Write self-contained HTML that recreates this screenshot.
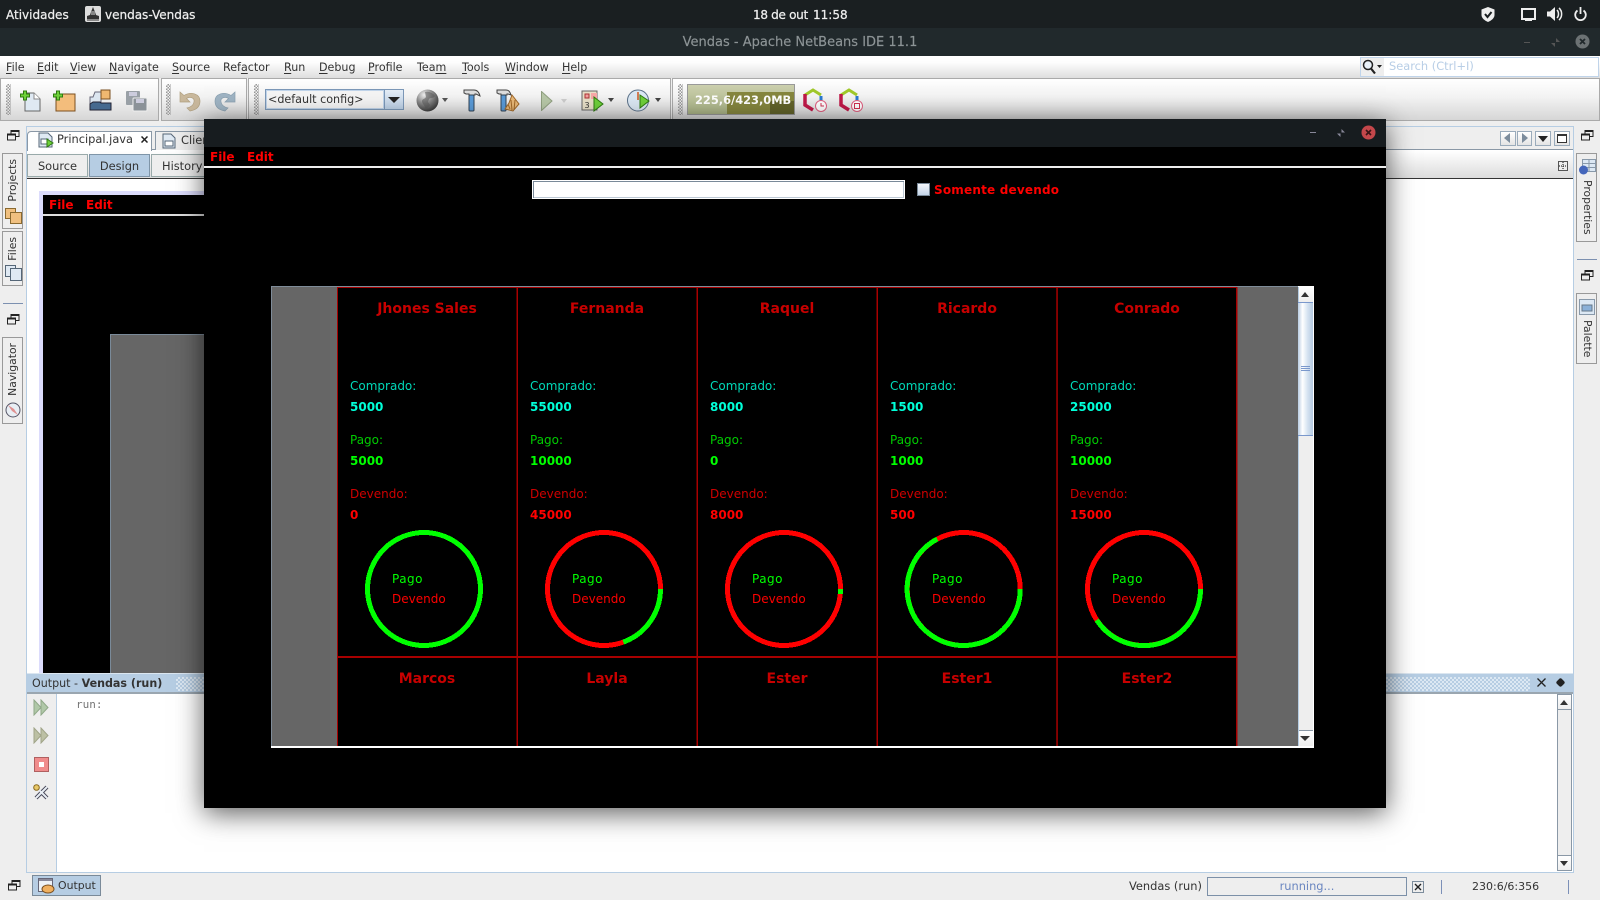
<!DOCTYPE html>
<html><head><meta charset="utf-8"><title>Vendas - Apache NetBeans IDE 11.1</title>
<style>
*{box-sizing:border-box}
html,body{margin:0;padding:0;width:1600px;height:900px;overflow:hidden;background:#eee;font-family:"DejaVu Sans","Liberation Sans",sans-serif;font-size:12px}
.a{position:absolute}
.t{position:absolute;white-space:nowrap;line-height:14px;font-size:11.4px;color:#333}
.t u{text-decoration:underline;text-underline-offset:2px}
.m{font-size:11.1px;top:61px}
.b12{font-size:12px}
.n{font-weight:bold;font-size:14px;line-height:16px;color:#c80000;width:176px;text-align:center}
.c{color:#00d8b8;font-size:12px}.cv{color:#00ffd8;font-weight:bold;font-size:12px}
.g{color:#00cc00;font-size:12px}.gv{color:#00ff00;font-weight:bold;font-size:12px}
.r{color:#d00000;font-size:12px}.rv{color:#ff0000;font-weight:bold;font-size:12px}
.pg{color:#00ff00;font-size:12px;letter-spacing:.5px}.dv{color:#ff0000;font-size:12px}
.tb{position:absolute;top:78px;height:43px;background:linear-gradient(#fff,#f2f2f2 45%,#d6d6d6);border:1px solid #aaa}
.grip{position:absolute;top:84px;width:5px;height:31px;background-image:conic-gradient(#999 25%,transparent 0 50%,#999 0 75%,transparent 0);background-size:3px 3px}
.side{position:absolute;background:#eee;border:1px solid #999}
.v{position:absolute;writing-mode:vertical-rl;white-space:nowrap;line-height:14px;font-size:10.8px;color:#333}
.btn{position:absolute;background:#eee;border:1px solid #9aa;text-align:center;line-height:22px;font-size:11.4px;color:#333}
.sq{position:absolute;background:linear-gradient(#fff,#e4e4e4);border:1px solid #9aabbb}
</style></head><body>

<!-- GNOME top bar -->
<div class="a" style="left:0;top:0;width:1600px;height:28px;background:#1a1f21"></div>
<div class="a" style="left:0;top:28px;width:1600px;height:28px;background:#21292c"></div>
<div class="t b12" style="left:6px;top:8px;color:#eee;-webkit-text-stroke:.25px #eee">Atividades</div>
<svg class="a" style="left:85px;top:6px" width="16" height="16"><rect width="16" height="16" rx="2" fill="#ddd"/><path d="M8 1l2 5 1 3 3 1v3H2v-3l3-1 1-3z" fill="#333"/><rect x="6" y="5" width="4" height="4" fill="#888"/><rect x="2" y="13" width="12" height="2" fill="#888"/></svg>
<div class="t b12" style="left:105px;top:8px;color:#eee;-webkit-text-stroke:.25px #eee">vendas-Vendas</div>
<div class="t b12" style="left:753px;top:8px;color:#eee;letter-spacing:-.3px;-webkit-text-stroke:.25px #eee">18 de out</div>
<div class="t b12" style="left:813px;top:8px;color:#eee;-webkit-text-stroke:.25px #eee">11:58</div>
<svg class="a" style="left:1481px;top:7px" width="14" height="15"><path d="M7 0l6.500 2.500V8c0 3-3 5.500-6.500 7C3.500 13.500.5 11 .5 8V2.500z" fill="#eee"/><path d="M4 7l2.500 3L10.500 5" fill="none" stroke="#1a1f21" stroke-width="2"/></svg>
<svg class="a" style="left:1521px;top:8px" width="15" height="13"><rect x="1" y="1" width="13" height="10" fill="none" stroke="#eee" stroke-width="2"/><rect x="4" y="11" width="7" height="2" fill="#eee"/></svg>
<svg class="a" style="left:1547px;top:7px" width="16" height="14"><path d="M0 4.500h3L8 0v14L3 9.500H0z" fill="#eee"/><path d="M10 3c2 2 2 6 0 8M12 1c3.500 3 3.500 9 0 12" fill="none" stroke="#eee" stroke-width="1.500"/></svg>
<svg class="a" style="left:1574px;top:7px" width="13" height="14"><path d="M3.500 3.500a5.300 5.300 0 1 0 6 0" fill="none" stroke="#eee" stroke-width="1.800"/><path d="M6.500 0v7" stroke="#eee" stroke-width="1.800"/></svg>
<div class="t" style="left:600px;width:400px;top:35px;text-align:center;color:#8d9496;font-size:13px;line-height:16px;-webkit-text-stroke:.15px #8d9496">Vendas - Apache NetBeans IDE 11.1</div>
<div class="a" style="left:1524px;top:42px;width:6px;height:1px;background:#555"></div>
<svg class="a" style="left:1551px;top:38px" width="9" height="9"><path d="M5 0v4h4M4 9V5H0" fill="#555"/></svg>
<svg class="a" style="left:1575px;top:34px" width="15" height="15"><circle cx="7.500" cy="7.500" r="7" fill="#6c7274"/><path d="M5 5l5 5M10 5l-5 5" stroke="#21292c" stroke-width="1.800"/></svg>

<!-- Menu bar -->
<div class="a" style="left:0;top:56px;width:1600px;height:22px;background:linear-gradient(#fff,#fdfdfd 30%,#dedede)"></div>
<div class="t m" style="left:6px"><u>F</u>ile</div>
<div class="t m" style="left:37px"><u>E</u>dit</div>
<div class="t m" style="left:70px"><u>V</u>iew</div>
<div class="t m" style="left:109px"><u>N</u>avigate</div>
<div class="t m" style="left:172px"><u>S</u>ource</div>
<div class="t m" style="left:223px">Ref<u>a</u>ctor</div>
<div class="t m" style="left:284px"><u>R</u>un</div>
<div class="t m" style="left:319px"><u>D</u>ebug</div>
<div class="t m" style="left:368px"><u>P</u>rofile</div>
<div class="t m" style="left:417px">Tea<u>m</u></div>
<div class="t m" style="left:462px"><u>T</u>ools</div>
<div class="t m" style="left:505px"><u>W</u>indow</div>
<div class="t m" style="left:562px"><u>H</u>elp</div>
<!-- Search -->
<div class="a" style="left:1360px;top:57px;width:239px;height:20px;background:#fff;border:1px solid #c0d4ea"></div>
<div class="a" style="left:1361px;top:58px;width:23px;height:18px;background:#eee"></div>
<svg class="a" style="left:1362px;top:59px" width="21" height="16"><circle cx="6" cy="6" r="4.500" fill="#e8f0f8" stroke="#222" stroke-width="1.500"/><path d="M9 9.500l4 5" stroke="#222" stroke-width="2.200"/><path d="M15 6h5l-2.500 3z" fill="#222"/></svg>
<div class="t" style="left:1389px;top:59px;color:#b8cee6">Search (Ctrl+I)</div>

<!-- Toolbars -->
<div class="a" style="left:0;top:78px;width:1600px;height:43px;background:#eee"></div>
<div class="tb" style="left:0;width:159px"></div>
<div class="tb" style="left:161px;width:86px"></div>
<div class="tb" style="left:248px;width:423px"></div>
<div class="tb" style="left:672px;width:928px"></div>
<div class="grip" style="left:6px"></div>
<div class="grip" style="left:166px"></div>
<div class="grip" style="left:254px"></div>
<div class="grip" style="left:678px"></div>

<svg class="a" style="left:20px;top:90px" width="21" height="22"><path d="M5 3h9l6 6v12H5z" fill="#dfe9f3" stroke="#666"/><path d="M14 3v6h6" fill="#fff" stroke="#888"/><path d="M3 3h3V0h3v3h3v3H9v3H6V6H3z" transform="translate(-2.500 1)" fill="#6fd13a" stroke="#2d7a10"/></svg>
<svg class="a" style="left:53px;top:90px" width="23" height="22"><path d="M3 4h19v17H3z" fill="#f3bd7c" stroke="#7b5020"/><path d="M3 3h3V0h3v3h3v3H9v3H6V6H3z" transform="translate(-2.500 1)" fill="#6fd13a" stroke="#2d7a10"/></svg>
<svg class="a" style="left:89px;top:89px" width="23" height="23"><path d="M1 8h3l2-5h6v18H1z" fill="#dce6f0" stroke="#667"/><rect x="12" y="1" width="9" height="9" fill="#f0b870" stroke="#7b5020"/><path d="M1 21v-6l3-2h7l1 1h10v7z" fill="#45698f" stroke="#223"/></svg>
<svg class="a" style="left:125px;top:90px" width="23" height="22"><rect x="1" y="1" width="14" height="14" rx="1" fill="#99a0a6"/><rect x="4" y="2" width="8" height="4" fill="#ccd"/><rect x="8" y="8" width="14" height="13" rx="1" fill="#8b9298" stroke="#eee"/><rect x="11" y="9" width="8" height="4" fill="#ccd"/></svg>
<svg class="a" style="left:179px;top:90px" width="22" height="22"><path d="M1 2v10h10L7.500 8.500C11 6 16 8 15 12c-.5 3-3 5-7 6l3 3c6-1 10-4 10-10C21 4 12 1 5 5.500z" fill="#c9b89c" stroke="#b0a080" stroke-width=".7"/></svg>
<svg class="a" style="left:214px;top:90px" width="22" height="22"><path d="M21 2v10H11l3.500-3.500C11 6 6 8 7 12c.5 3 3 5 7 6l-3 3C5 20 1 17 1 11 1 4 10 1 17 5.500z" fill="#9fb4c4" stroke="#8aa0b0" stroke-width=".7"/></svg>

<!-- combo -->
<div class="a" style="left:265px;top:89px;width:139px;height:21px;background:#fff;border:1px solid #7c98b8"></div>
<div class="a" style="left:266px;top:90px;width:118px;height:19px;background:#f4f4f4;border:1px solid #c0d4ea"></div>
<div class="t" style="left:268px;top:93px;font-size:11.15px">&lt;default config&gt;</div>
<div class="a" style="left:384px;top:90px;width:19px;height:19px;background:linear-gradient(#e4edf6,#bcd0e6);border-left:1px solid #7c98b8"></div>
<div class="a" style="left:388px;top:97px;width:0;height:0;border:6px solid transparent;border-top:6px solid #222;border-bottom:0"></div>

<svg class="a" style="left:416px;top:89px" width="23" height="23"><defs><radialGradient id="gl" cx=".35" cy=".25" r=".85"><stop offset="0" stop-color="#f0f0f0"/><stop offset=".45" stop-color="#8a8a8a"/><stop offset="1" stop-color="#2c2c2c"/></radialGradient></defs><circle cx="11.500" cy="11.500" r="11" fill="url(#gl)"/><path d="M9 3c4-1 8 1 10 4-2 3-4 1-6 3l-1 3 2 3c-2 3-4 4-5 3 0-3-3-4-3-7 0-2 3-2 4-4z" fill="#555" opacity=".55"/></svg>
<div class="a" style="left:442px;top:98px;border:3.500px solid transparent;border-top:4px solid #555;border-bottom:0"></div>
<svg class="a" style="left:463px;top:89px" width="18" height="23"><path d="M1 1h10c3 0 5 2 6 6l-4-2h-1v1H6V5H3L1 4z" fill="#ddd" stroke="#444"/><rect x="6" y="6" width="5" height="16" rx="1" fill="#5a9bd8" stroke="#345"/></svg>
<svg class="a" style="left:496px;top:89px" width="24" height="23"><path d="M1 1h9c3 0 4 2 5 5l-3-1h-1v1H5V5H3L1 4z" fill="#ddd" stroke="#444"/><rect x="5" y="6" width="5" height="16" rx="1" fill="#5a9bd8" stroke="#345"/><path d="M16 6l7 9-6 7-8-2 4-6z" fill="#e8b878" stroke="#a06828"/><path d="M15 11l1 10M19 11l-1 10M12 15l2 5" stroke="#a06828" fill="none"/></svg>
<svg class="a" style="left:541px;top:91px" width="12" height="20"><path d="M.5.5L11 10 .5 19.500z" fill="#b8c8a8" stroke="#90a080"/></svg>
<div class="a" style="left:561px;top:99px;border:3.500px solid transparent;border-top:4px solid #ccc;border-bottom:0"></div>
<svg class="a" style="left:581px;top:89px" width="23" height="23"><rect x="1" y="2" width="15" height="19" fill="#e8e0c8" stroke="#666"/><rect x="4" y="5" width="4" height="4" fill="#f4a0a0" stroke="#a33"/><text x="3.500" y="19" font-size="8" fill="#333" font-family="DejaVu Sans">3</text><rect x="10" y="4" width="6" height="6" fill="#f8a8a8"/><path d="M13 8l9 7-9 7z" fill="#6fd13a" stroke="#2d7a10"/></svg>
<div class="a" style="left:608px;top:98px;border:3.500px solid transparent;border-top:4px solid #444;border-bottom:0"></div>
<svg class="a" style="left:627px;top:89px" width="23" height="23"><circle cx="11" cy="11.500" r="10.500" fill="#dbe8f4" stroke="#5a7088"/><path d="M11 3v8" stroke="#d05a20" stroke-width="1.500"/><path d="M13 6l9 6-9 7z" fill="#6fd13a" stroke="#2d7a10"/></svg>
<div class="a" style="left:655px;top:98px;border:3.500px solid transparent;border-top:4px solid #444;border-bottom:0"></div>

<!-- Memory -->
<div class="a" style="left:687px;top:84px;width:108px;height:31px;border:1px solid #999;background:linear-gradient(#ccd0ae,#a8b284)"></div>
<div class="a" style="left:727px;top:92px;width:67px;height:22px;background:#85863e"></div>
<div class="a" style="left:770px;top:101px;width:24px;height:13px;background:#62632a"></div>
<div class="t" style="left:695px;top:93px;color:#fff;font-weight:bold;font-size:11.4px">225,6/423,0MB</div>

<svg class="a" style="left:803px;top:88px" width="24" height="24"><path d="M2 7l8-5 8 5" fill="none" stroke="#a0c82a" stroke-width="3"/><path d="M2 6v11l8 5" fill="none" stroke="#c01848" stroke-width="3.500"/><path d="M18 8v5" stroke="#2a78d0" stroke-width="3"/><circle cx="18" cy="18" r="5.500" fill="#fff" stroke="#e06080"/><path d="M18 15v3h3" stroke="#d03050" fill="none"/></svg>
<svg class="a" style="left:839px;top:88px" width="24" height="24"><path d="M2 7l8-5 8 5" fill="none" stroke="#a0c82a" stroke-width="3"/><path d="M2 6v11l8 5" fill="none" stroke="#c01848" stroke-width="3.500"/><path d="M18 8v5" stroke="#2a78d0" stroke-width="3"/><circle cx="18" cy="18" r="5.500" fill="#fff" stroke="#e06080"/><rect x="15.500" y="15.500" width="5" height="5" fill="#fff" stroke="#d03050"/></svg>

<!-- Main area -->
<div class="a" style="left:26px;top:126px;width:1548px;height:747px;border:1px solid #b6cde3;background:#fff"></div>
<!-- tabs row -->
<div class="a" style="left:27px;top:127px;width:1546px;height:23px;background:#eee;border-bottom:1px solid #8a98a6"></div>
<div class="a" style="left:27px;top:131px;width:125px;height:20px;background:#fff;border:1px solid #8a98a6;border-bottom:0;border-radius:4px 0 0 0"></div>
<div class="a" style="left:155px;top:131px;width:60px;height:19px;background:#eee;border:1px solid #8a98a6;border-bottom:0"></div>
<svg class="a" style="left:38px;top:132px" width="16" height="16"><path d="M1 1h9l4 4v10H1z" fill="#dfe9f3" stroke="#567"/><rect x="3" y="7" width="7" height="5" fill="#fff" stroke="#567"/><path d="M9 7l6 4-6 4z" fill="#6fd13a" stroke="#2d7a10"/></svg>
<div class="t" style="left:57px;top:132px">Principal.java</div>
<svg class="a" style="left:141px;top:136px" width="7" height="7"><path d="M.5.5l6 6M6.500.5l-6 6" stroke="#222" stroke-width="1.500"/></svg>
<svg class="a" style="left:162px;top:133px" width="14" height="16"><path d="M1 1h8l4 4v10H1z" fill="#dfe9f3" stroke="#567"/><rect x="3" y="8" width="8" height="5" fill="#fff" stroke="#567"/></svg>
<div class="t" style="left:181px;top:133px">Clien</div>
<div class="sq" style="left:1500px;top:131px;width:16px;height:15px"></div>
<div class="sq" style="left:1517px;top:131px;width:15px;height:15px"></div>
<div class="sq" style="left:1535px;top:131px;width:16px;height:15px"></div>
<div class="sq" style="left:1554px;top:131px;width:16px;height:15px"></div>
<div class="a" style="left:1504px;top:133px;border:5px solid transparent;border-right:6px solid #7c8c9c;border-left:0;border-top-width:5.500px;border-bottom-width:5.500px"></div>
<div class="a" style="left:1522px;top:133px;border:5px solid transparent;border-left:6px solid #7c8c9c;border-right:0;border-top-width:5.500px;border-bottom-width:5.500px"></div>
<div class="a" style="left:1538px;top:136px;border:5px solid transparent;border-top:6px solid #222;border-bottom:0"></div>
<div class="a" style="left:1557px;top:134px;width:10px;height:9px;border:1px solid #333;border-top-width:2px;background:#fff"></div>
<!-- source/design row -->
<div class="a" style="left:27px;top:151px;width:1546px;height:27px;background:linear-gradient(#fff,#dcdcdc)"></div>
<div class="a" style="left:27px;top:178px;width:1546px;height:1px;background:#333"></div>
<div class="btn" style="left:27px;top:154px;width:61px;height:23px">Source</div>
<div class="btn" style="left:89px;top:154px;width:61px;height:23px;background:#b6cde3;border-color:#7f95a8">Design</div>
<div class="btn" style="left:151px;top:154px;width:70px;height:23px;text-align:left;padding-left:10px">History</div>
<svg class="a" style="left:1558px;top:161px" width="10" height="10"><rect x=".5" y=".5" width="9" height="9" fill="#eee" stroke="#555"/><path d="M5 1v8M1 5h8" stroke="#111" stroke-dasharray="1 1" fill="none"/></svg>

<!-- form preview -->
<div class="a" style="left:39px;top:191px;width:300px;height:482px;background:#dcdcfc"></div>
<div class="a" style="left:43px;top:195px;width:296px;height:478px;background:#000"></div>
<div class="a" style="left:43px;top:214px;width:296px;height:2px;background:#ddd"></div>
<div class="t b12" style="left:49px;top:198px;color:#f00;font-weight:bold">File</div>
<div class="t b12" style="left:86px;top:198px;color:#f00;font-weight:bold">Edit</div>
<div class="a" style="left:110px;top:334px;width:229px;height:339px;background:#666;border:1px solid #7a8a99;border-right:0;border-bottom:0"></div>

<!-- Output -->
<div class="a" style="left:27px;top:673px;width:1546px;height:21px;background:#b6cde3;border-bottom:2px solid #9aa6b0;border-top:1px solid #dbe6f0"></div>
<div class="t" style="left:32px;top:677px;font-size:11.1px">Output - <b>Vendas (run)</b></div>
<div class="a" style="left:176px;top:677px;width:1354px;height:14px;background-image:conic-gradient(#dce8f3 25%,#b6cde3 0 50%,#dce8f3 0 75%,#b6cde3 0);background-size:4px 4px"></div>
<svg class="a" style="left:1537px;top:678px" width="9" height="9"><path d="M.5.5l8 8M8.500.5l-8 8" stroke="#222" stroke-width="1.300"/></svg>
<div class="a" style="left:1557px;top:679px;width:7px;height:7px;background:#222;transform:rotate(45deg);border-radius:2px"></div>
<div class="a" style="left:27px;top:694px;width:30px;height:178px;background:#eee;border-right:1px solid #b6cde3"></div>
<div class="a" style="left:57px;top:694px;width:1516px;height:178px;background:#fff"></div>
<div class="t" style="left:76px;top:698px;font-family:'DejaVu Sans Mono',monospace;font-size:11px;color:#777">run:</div>
<svg class="a" style="left:33px;top:699px" width="16" height="17"><path d="M1 1l7 7.500-7 7.500zM8 1l7 7.500-7 7.500z" fill="#b0c8a8" stroke="#8fa888"/></svg>
<svg class="a" style="left:33px;top:727px" width="16" height="17"><path d="M1 1l7 7.500-7 7.500zM8 1l7 7.500-7 7.500z" fill="#bcc0a4" stroke="#a0a488"/></svg>
<svg class="a" style="left:34px;top:757px" width="15" height="15"><rect x=".5" y=".5" width="14" height="14" fill="#f08c8c" stroke="#b06060"/><rect x="5" y="5" width="5" height="5" fill="#fff"/></svg>
<svg class="a" style="left:33px;top:784px" width="17" height="16"><circle cx="3.500" cy="3.500" r="2.800" fill="#e8c868" stroke="#8a6a20"/><path d="M3 14l11-11M14 14L7 7" stroke="#445" stroke-width="4"/><path d="M3 14l11-11M14 14L7 7" stroke="#e8eef4" stroke-width="2"/></svg>
<!-- output scrollbar -->
<div class="a" style="left:1557px;top:694px;width:15px;height:177px;background:#eee;border:1px solid #8a98a6"></div>
<div class="a" style="left:1558px;top:695px;width:13px;height:15px;background:linear-gradient(#fff,#eee);border-bottom:1px solid #8a98a6"></div>
<div class="a" style="left:1558px;top:855px;width:13px;height:15px;background:linear-gradient(#fff,#eee);border-top:1px solid #8a98a6"></div>
<div class="a" style="left:1560px;top:700px;border:4.500px solid transparent;border-bottom:5px solid #333;border-top:0"></div>
<div class="a" style="left:1560px;top:861px;border:4.500px solid transparent;border-top:5px solid #333;border-bottom:0"></div>

<!-- left strip -->
<div class="a" style="left:0;top:121px;width:26px;height:752px;background:#eee"></div>
<svg class="a" style="left:7px;top:130px" width="13" height="11"><rect x="4" y=".5" width="8" height="6" fill="#eee" stroke="#222"/><rect x=".5" y="4" width="8" height="6" fill="#eee" stroke="#222"/><rect x=".5" y="4" width="8" height="1.500" fill="#222"/><rect x="4" y=".5" width="8" height="1.500" fill="#222"/></svg>
<div class="side" style="left:2px;top:153px;width:21px;height:76px"></div>
<div class="v" style="left:6px;top:159px;transform:rotate(180deg)">Projects</div>
<svg class="a" style="left:5px;top:208px" width="17" height="16"><rect x=".5" y=".5" width="10" height="10" fill="#f0c080" stroke="#8a6a30"/><rect x="5.500" y="4.500" width="11" height="11" fill="#f0c080" stroke="#8a6a30"/></svg>
<div class="side" style="left:2px;top:231px;width:21px;height:55px"></div>
<div class="v" style="left:6px;top:237px;transform:rotate(180deg)">Files</div>
<svg class="a" style="left:5px;top:265px" width="17" height="16"><rect x=".5" y=".5" width="10" height="11" fill="#dfe9f3" stroke="#567"/><rect x="5.500" y="3.500" width="11" height="12" fill="#dfe9f3" stroke="#567"/></svg>
<div class="a" style="left:3px;top:303px;width:20px;height:1px;background:#7c90b0"></div>
<svg class="a" style="left:7px;top:314px" width="13" height="11"><rect x="4" y=".5" width="8" height="6" fill="#eee" stroke="#222"/><rect x=".5" y="4" width="8" height="6" fill="#eee" stroke="#222"/><rect x=".5" y="4" width="8" height="1.500" fill="#222"/><rect x="4" y=".5" width="8" height="1.500" fill="#222"/></svg>
<div class="side" style="left:2px;top:337px;width:21px;height:87px"></div>
<div class="v" style="left:6px;top:343px;transform:rotate(180deg)">Navigator</div>
<svg class="a" style="left:5px;top:402px" width="16" height="16"><circle cx="8" cy="8" r="7" fill="#e8eef4" stroke="#556"/><path d="M3 3l6 4 4 6-6-4z" fill="#e09090"/></svg>

<!-- right strip -->
<div class="a" style="left:1574px;top:121px;width:26px;height:752px;background:#eee"></div>
<svg class="a" style="left:1581px;top:130px" width="13" height="11"><rect x="4" y=".5" width="8" height="6" fill="#eee" stroke="#222"/><rect x=".5" y="4" width="8" height="6" fill="#eee" stroke="#222"/><rect x=".5" y="4" width="8" height="1.500" fill="#222"/><rect x="4" y=".5" width="8" height="1.500" fill="#222"/></svg>
<div class="side" style="left:1576px;top:153px;width:21px;height:89px"></div>
<svg class="a" style="left:1579px;top:159px" width="17" height="16"><rect x="3.500" y=".5" width="13" height="12" fill="#dce8f4" stroke="#89a"/><path d="M4 4.500h12M4 8.500h12M10 1v11" stroke="#89a"/><circle cx="4.500" cy="11" r="4.500" fill="#4466bb"/></svg>
<div class="v" style="left:1580px;top:180px">Properties</div>
<div class="a" style="left:1577px;top:259px;width:20px;height:1px;background:#7c90b0"></div>
<svg class="a" style="left:1581px;top:270px" width="13" height="11"><rect x="4" y=".5" width="8" height="6" fill="#eee" stroke="#222"/><rect x=".5" y="4" width="8" height="6" fill="#eee" stroke="#222"/><rect x=".5" y="4" width="8" height="1.500" fill="#222"/><rect x="4" y=".5" width="8" height="1.500" fill="#222"/></svg>
<div class="side" style="left:1576px;top:293px;width:21px;height:71px"></div>
<svg class="a" style="left:1579px;top:299px" width="16" height="16"><rect x=".5" y=".5" width="15" height="15" fill="#dce8f4" stroke="#89a"/><rect x="3" y="6" width="10" height="6" fill="#8ab0d8" stroke="#678"/></svg>
<div class="v" style="left:1580px;top:320px">Palette</div>

<!-- Status bar -->
<div class="a" style="left:0;top:873px;width:1600px;height:27px;background:#eee"></div>
<svg class="a" style="left:8px;top:880px" width="13" height="11"><rect x="4" y=".5" width="8" height="6" fill="#eee" stroke="#222"/><rect x=".5" y="4" width="8" height="6" fill="#eee" stroke="#222"/><rect x=".5" y="4" width="8" height="1.500" fill="#222"/><rect x="4" y=".5" width="8" height="1.500" fill="#222"/></svg>
<div class="a" style="left:32px;top:875px;width:69px;height:21px;background:#b6cde3;border:1px solid #7a8a99"></div>
<svg class="a" style="left:38px;top:878px" width="17" height="16"><rect x=".5" y=".5" width="14" height="13" fill="#eef2f6" stroke="#667"/><rect x="1" y="1" width="13" height="2" fill="#889"/><ellipse cx="10" cy="11" rx="6" ry="4" fill="#f0b060" stroke="#7b5020"/></svg>
<div class="t" style="left:58px;top:879px;font-size:10.9px">Output</div>
<div class="t" style="left:1129px;top:879px">Vendas (run)</div>
<div class="a" style="left:1207px;top:877px;width:200px;height:19px;border:1px solid #7c90a8;background:#eee"></div>
<div class="t" style="left:1207px;width:200px;text-align:center;top:879px;color:#6a86c0">running...</div>
<svg class="a" style="left:1412px;top:881px" width="12" height="12"><rect x=".5" y=".5" width="11" height="11" fill="#eee" stroke="#7c8c9c"/><path d="M3 3l6 6M9 3l-6 6" stroke="#222" stroke-width="1.400"/></svg>
<div class="a" style="left:1441px;top:880px;width:1px;height:14px;background:#7c90b8"></div>
<div class="t" style="left:1472px;top:880px;font-size:11px">230:6/6:356</div>
<div class="a" style="left:1568px;top:880px;width:1px;height:14px;background:#7c90b8"></div>

<!-- Floating window -->
<div class="a" style="left:204px;top:119px;width:1182px;height:689px;background:#000;box-shadow:0 5px 26px rgba(0,0,0,.65)"></div>
<div class="a" style="left:204px;top:119px;width:1182px;height:28px;background:#171c1f"></div>
<div class="a" style="left:1310px;top:132px;width:6px;height:1px;background:#889"></div>
<svg class="a" style="left:1337px;top:129px" width="8" height="8"><path d="M4.500 0v3.500H8M3.500 8V4.500H0" fill="#889"/></svg>
<svg class="a" style="left:1361px;top:125px" width="15" height="15"><circle cx="7.500" cy="7.500" r="7" fill="#c4474b"/><path d="M5 5l5 5M10 5l-5 5" stroke="#3a1416" stroke-width="1.600"/></svg>
<div class="a" style="left:204px;top:166px;width:1182px;height:2px;background:#eee"></div>
<div class="t b12" style="left:210px;top:150px;color:#f00;font-weight:bold">File</div>
<div class="t b12" style="left:247px;top:150px;color:#f00;font-weight:bold">Edit</div>
<div class="a" style="left:532px;top:180px;width:373px;height:19px;background:#fff;border:1px solid #fff;box-shadow:inset 1px 1px 0 #7a8a99,inset -1px -1px 0 #bcc8d4"></div>
<div class="a" style="left:917px;top:183px;width:13px;height:13px;background:linear-gradient(#f4f7fb,#c4d4e8);border:1px solid #7a8a99"></div>
<div class="t b12" style="left:934px;top:183px;color:#f00;font-weight:bold;letter-spacing:.2px">Somente devendo</div>

<!-- Table panel -->
<div class="a" style="left:271px;top:286px;width:1043px;height:462px;background:#fff"></div>
<div class="a" style="left:271px;top:286px;width:1027px;height:460px;background:#666;border-left:1px solid #7f8c99;border-top:1px solid #7f8c99"></div>
<div class="a" style="left:337px;top:287px;width:900px;height:459px;background:#000"></div>
<svg class="a" style="left:0;top:0" width="1600" height="900">
<g fill="#a80000">
<rect x="337" y="287" width="1" height="459"/>
<rect x="516.500" y="287" width="1.500" height="459"/>
<rect x="696.500" y="287" width="1.500" height="459"/>
<rect x="876.500" y="287" width="1.500" height="459"/>
<rect x="1056.300" y="287" width="1.500" height="459"/>
<rect x="1236" y="287" width="1.500" height="459"/>
<rect x="337" y="287" width="900" height="1"/>
<rect x="337" y="656" width="900" height="2"/>
</g>
<g fill="none" stroke-width="5" shape-rendering="crispEdges">
<circle cx="424" cy="589" r="56.500" stroke="#00ff00"/>
<circle cx="604" cy="589" r="56.500" stroke="#ff0000"/>
<path d="M660.500 589A56.500 56.500 0 0 1 623.300 642.100" stroke="#00ff00"/>
<circle cx="784" cy="589" r="56.500" stroke="#ff0000"/>
<path d="M840.500 589A56.500 56.500 0 0 1 840.300 594" stroke="#00ff00"/>
<circle cx="963.700" cy="589" r="56.500" stroke="#ff0000"/>
<path d="M1020.200 589A56.500 56.500 0 1 1 937.300 539" stroke="#00ff00"/>
<circle cx="1144" cy="589" r="56.500" stroke="#ff0000"/>
<path d="M1200.500 589A56.500 56.500 0 0 1 1096.700 620" stroke="#00ff00"/>
</g>
</svg>

<!-- col 1 -->
<div class="t n" style="left:339px;top:301px">Jhones Sales</div>
<div class="t c" style="left:350px;top:379px">Comprado:</div><div class="t cv" style="left:350px;top:400px">5000</div>
<div class="t g" style="left:350px;top:433px">Pago:</div><div class="t gv" style="left:350px;top:454px">5000</div>
<div class="t r" style="left:350px;top:487px">Devendo:</div><div class="t rv" style="left:350px;top:508px">0</div>
<div class="t pg" style="left:392px;top:572px">Pago</div><div class="t dv" style="left:392px;top:592px">Devendo</div>
<!-- col 2 -->
<div class="t n" style="left:519px;top:301px">Fernanda</div>
<div class="t c" style="left:530px;top:379px">Comprado:</div><div class="t cv" style="left:530px;top:400px">55000</div>
<div class="t g" style="left:530px;top:433px">Pago:</div><div class="t gv" style="left:530px;top:454px">10000</div>
<div class="t r" style="left:530px;top:487px">Devendo:</div><div class="t rv" style="left:530px;top:508px">45000</div>
<div class="t pg" style="left:572px;top:572px">Pago</div><div class="t dv" style="left:572px;top:592px">Devendo</div>
<!-- col 3 -->
<div class="t n" style="left:699px;top:301px">Raquel</div>
<div class="t c" style="left:710px;top:379px">Comprado:</div><div class="t cv" style="left:710px;top:400px">8000</div>
<div class="t g" style="left:710px;top:433px">Pago:</div><div class="t gv" style="left:710px;top:454px">0</div>
<div class="t r" style="left:710px;top:487px">Devendo:</div><div class="t rv" style="left:710px;top:508px">8000</div>
<div class="t pg" style="left:752px;top:572px">Pago</div><div class="t dv" style="left:752px;top:592px">Devendo</div>
<!-- col 4 -->
<div class="t n" style="left:879px;top:301px">Ricardo</div>
<div class="t c" style="left:890px;top:379px">Comprado:</div><div class="t cv" style="left:890px;top:400px">1500</div>
<div class="t g" style="left:890px;top:433px">Pago:</div><div class="t gv" style="left:890px;top:454px">1000</div>
<div class="t r" style="left:890px;top:487px">Devendo:</div><div class="t rv" style="left:890px;top:508px">500</div>
<div class="t pg" style="left:932px;top:572px">Pago</div><div class="t dv" style="left:932px;top:592px">Devendo</div>
<!-- col 5 -->
<div class="t n" style="left:1059px;top:301px">Conrado</div>
<div class="t c" style="left:1070px;top:379px">Comprado:</div><div class="t cv" style="left:1070px;top:400px">25000</div>
<div class="t g" style="left:1070px;top:433px">Pago:</div><div class="t gv" style="left:1070px;top:454px">10000</div>
<div class="t r" style="left:1070px;top:487px">Devendo:</div><div class="t rv" style="left:1070px;top:508px">15000</div>
<div class="t pg" style="left:1112px;top:572px">Pago</div><div class="t dv" style="left:1112px;top:592px">Devendo</div>
<!-- row 2 -->
<div class="t n" style="left:339px;top:671px">Marcos</div>
<div class="t n" style="left:519px;top:671px">Layla</div>
<div class="t n" style="left:699px;top:671px">Ester</div>
<div class="t n" style="left:879px;top:671px">Ester1</div>
<div class="t n" style="left:1059px;top:671px">Ester2</div>

<!-- Panel scrollbar -->
<div class="a" style="left:1298px;top:287px;width:15px;height:459px;background:#eee;border-left:1px solid #b6cde3"></div>
<div class="a" style="left:1299px;top:287px;width:14px;height:15px;background:linear-gradient(#fff,#eee)"></div>
<div class="a" style="left:1301px;top:292px;border:4.500px solid transparent;border-bottom:5px solid #333;border-top:0"></div>
<div class="a" style="left:1298px;top:302px;width:15px;height:134px;background:linear-gradient(90deg,#b8cce2,#fff 30%,#d4e2f0 65%,#b4c9e0);border-top:1px solid #7a98cc;border-bottom:1px solid #7a98cc"></div>
<div class="a" style="left:1301px;top:366px;width:9px;height:5px;border-top:1px solid #7a98cc;border-bottom:1px solid #7a98cc"></div>
<div class="a" style="left:1301px;top:368px;width:9px;height:1px;background:#7a98cc"></div>
<div class="a" style="left:1299px;top:730px;width:14px;height:16px;background:linear-gradient(#fff,#eee);border-top:1px solid #8a98a6"></div>
<div class="a" style="left:1300px;top:736px;border:5px solid transparent;border-top:5px solid #333;border-bottom:0"></div>

</body></html>
